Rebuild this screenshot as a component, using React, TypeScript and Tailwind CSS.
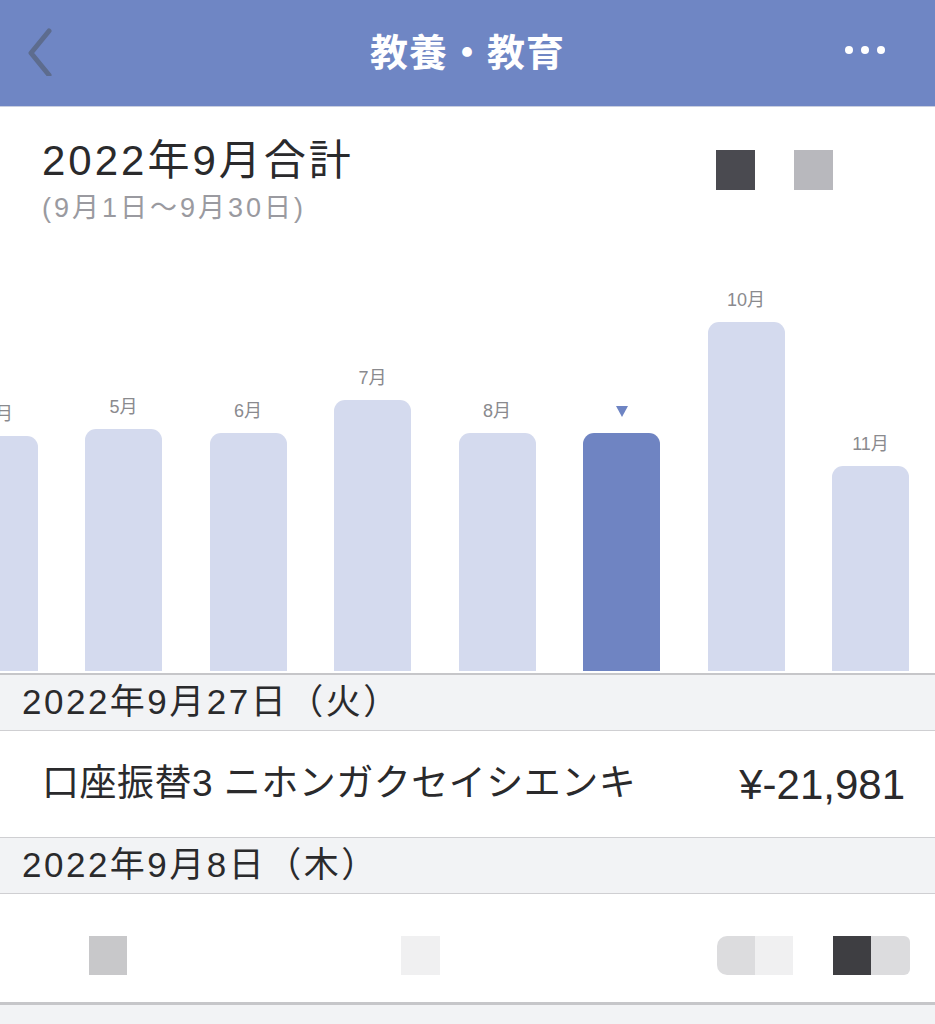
import React from 'react';

const FONT = '"Liberation Sans", "Noto Sans CJK JP", sans-serif';

type Bar = { label: string; height: number; selected?: boolean };

const bars: Bar[] = [
  { label: '4月', height: 235 },
  { label: '5月', height: 242 },
  { label: '6月', height: 238 },
  { label: '7月', height: 271 },
  { label: '8月', height: 238 },
  { label: '9月', height: 238, selected: true },
  { label: '10月', height: 349 },
  { label: '11月', height: 205 },
];

// Top navigation bar
const NavBar = () => (
  <div className="h-[107px] bg-[#6f86c4] grid grid-cols-[1fr_auto_1fr] items-center px-[22px] border-b border-[#c9cfe0]">
    <svg width="34" height="50" viewBox="0 0 34 50" className="mt-[-4px]">
      <path d="M27 5 L9 27 L27 49" stroke="#5d6c8e" strokeWidth="5" fill="none" strokeLinecap="round" strokeLinejoin="round" />
    </svg>
    <h1
      className="text-white font-bold text-[38px] tracking-[1px] mt-[-8px]"
      style={{ fontFamily: '"Noto Sans CJK JP", sans-serif' }}
    >
      教養・教育
    </h1>
    <div className="flex items-center justify-end gap-[8px] mr-[28px] mt-[-6px]">
      <span className="w-[8px] h-[8px] rounded-full bg-white" />
      <span className="w-[8px] h-[8px] rounded-full bg-white" />
      <span className="w-[8px] h-[8px] rounded-full bg-white" />
    </div>
  </div>
);

const Chart = () => (
  <div className="flex items-end gap-[47.5px] ml-[-39.5px] flex-1">
    {bars.map((b) => (
      <div key={b.label} className="w-[77px] shrink-0 flex flex-col items-center">
        {b.selected ? (
          <svg width="14" height="13" viewBox="0 0 14 13" className="mb-[15px]">
            <path d="M1 1 H13 L7 12 Z" fill="#6e84c3" />
          </svg>
        ) : (
          <span className="text-[18px] leading-[22px] text-[#8a8a8e] mb-[11px]" style={{ fontFamily: FONT }}>
            {b.label}
          </span>
        )}
        <div
          className={`w-full rounded-t-[11px] ${b.selected ? 'bg-[#6f84c2]' : 'bg-[#d4daee]'}`}
          style={{ height: b.height }}
        />
      </div>
    ))}
  </div>
);

const Summary = () => (
  <div className="h-[566px] pb-[2px] flex flex-col overflow-hidden">
    <div className="flex items-start justify-between pl-[42px] pr-[102px] pt-[30px]">
      <div>
        <div className="text-[42px] leading-[48px] tracking-[3px] text-[#2a2a2c]" style={{ fontFamily: FONT }}>
          2022年9月合計
        </div>
        <div className="text-[27px] leading-[34px] tracking-[3px] text-[#9a9aa0] mt-[6px]" style={{ fontFamily: FONT }}>
          (9月1日～9月30日)
        </div>
      </div>
      <div className="flex gap-[39px] mt-[13px]">
        <div className="w-[39px] h-[40px] bg-[#4a4a50]" />
        <div className="w-[39px] h-[40px] bg-[#b8b8bd]" />
      </div>
    </div>
    <Chart />
  </div>
);

const DateHeader = ({ children }: { children: React.ReactNode }) => (
  <div
    className="h-[56px] bg-[#f2f3f5] flex items-center pl-[22px] text-[35px] tracking-[2.5px] text-[#2a2a2c] border-b border-[#cfcfd2]"
    style={{ fontFamily: FONT }}
  >
    {children}
  </div>
);

export default function App() {
  return (
    <div className="w-[935px] h-[1024px] bg-[#f2f3f5] overflow-hidden">
      <NavBar />
      <div className="bg-white">
        <Summary />
      </div>
      <div className="border-t-[2px] border-[#c6c6c9]">
        <DateHeader>2022年9月27日（火）</DateHeader>
        <div
          className="h-[107px] bg-white flex items-center justify-between pl-[42px] pr-[30px] border-b border-[#cfcfd2]"
          style={{ fontFamily: FONT }}
        >
          <span className="text-[37px] tracking-[0.5px] text-[#2a2a2c]">口座振替3 ニホンガクセイシエンキ</span>
          <span className="text-[42px] text-[#2a2a2c]">¥-21,981</span>
        </div>
        <DateHeader>2022年9月8日（木）</DateHeader>
        <div className="h-[111px] bg-white flex items-start pt-[42px] border-b-[3px] border-[#c6c6c9]">
          <div className="flex items-center w-full">
            <div className="ml-[89px] w-[38px] h-[39px] bg-[#c8c8ca]" />
            <div className="ml-[274px] w-[39px] h-[39px] bg-[#f0f0f1]" />
            <div className="ml-[277px] flex">
              <div className="w-[38px] h-[39px] bg-[#dcdcde] rounded-l-[10px]" />
              <div className="w-[38px] h-[39px] bg-[#f0f0f1]" />
            </div>
            <div className="ml-[40px] flex">
              <div className="w-[38px] h-[39px] bg-[#3e3e42]" />
              <div className="w-[39px] h-[39px] bg-[#dcdcde] rounded-r-[6px]" />
            </div>
          </div>
        </div>
      </div>
    </div>
  );
}
